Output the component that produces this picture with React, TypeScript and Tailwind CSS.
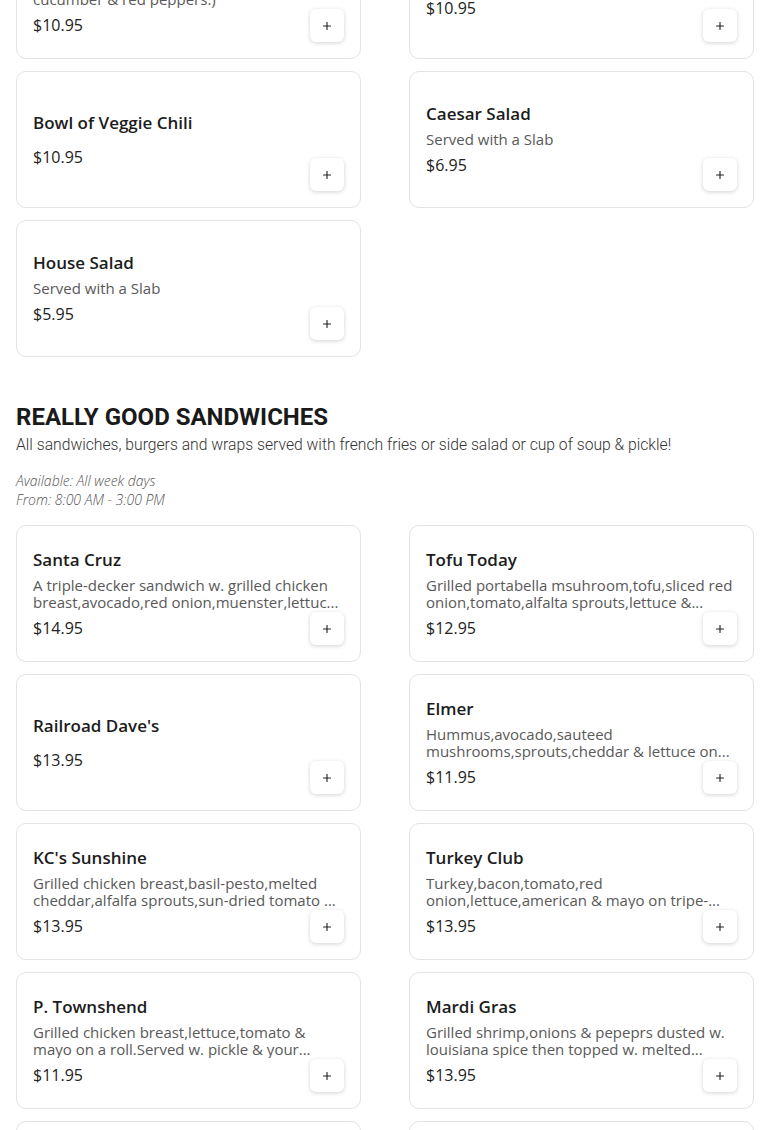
import { Plus } from "lucide-react";

type Item = { name: string; desc?: string; price: string };

const salads: Item[] = [
  {
    name: "Garden Salad",
    desc: "(Mixed greens,tomatoes,red onion,carrots, cucumber & red peppers.)",
    price: "$10.95",
  },
  { name: "Cup of Soup & Half Salad", price: "$10.95" },
  { name: "Bowl of Veggie Chili", price: "$10.95" },
  { name: "Caesar Salad", desc: "Served with a Slab", price: "$6.95" },
  { name: "House Salad", desc: "Served with a Slab", price: "$5.95" },
];

const sandwiches: Item[] = [
  {
    name: "Santa Cruz",
    desc: "A triple-decker sandwich w. grilled chicken breast,avocado,red onion,muenster,lettuc...",
    price: "$14.95",
  },
  {
    name: "Tofu Today",
    desc: "Grilled portabella msuhroom,tofu,sliced red onion,tomato,alfalta sprouts,lettuce &...",
    price: "$12.95",
  },
  { name: "Railroad Dave's", price: "$13.95" },
  {
    name: "Elmer",
    desc: "Hummus,avocado,sauteed mushrooms,sprouts,cheddar & lettuce on...",
    price: "$11.95",
  },
  {
    name: "KC's Sunshine",
    desc: "Grilled chicken breast,basil-pesto,melted cheddar,alfalfa sprouts,sun-dried tomato ...",
    price: "$13.95",
  },
  {
    name: "Turkey Club",
    desc: "Turkey,bacon,tomato,red onion,lettuce,american & mayo on tripe-...",
    price: "$13.95",
  },
  {
    name: "P. Townshend",
    desc: "Grilled chicken breast,lettuce,tomato & mayo on a roll.Served w. pickle & your...",
    price: "$11.95",
  },
  {
    name: "Mardi Gras",
    desc: "Grilled shrimp,onions & pepeprs dusted w. louisiana spice then topped w. melted...",
    price: "$13.95",
  },
  { name: "Veggie Burger", desc: "Served on a toasted bun.", price: "$12.95" },
  { name: "BLT", desc: "Bacon,lettuce & tomato on sourdough.", price: "$10.95" },
];

function MenuCard({ item }: { item: Item }) {
  return (
    <div className="relative flex min-h-[137px] flex-col justify-center rounded-[10px] border border-[#e3e3e3] bg-white p-4">
      <h3 className="text-[17px] font-semibold leading-6 text-[#1c1c1c]">{item.name}</h3>
      <p className="my-[5px] line-clamp-2 text-[15px] leading-[17px] text-[#595959]">
        {item.desc}
      </p>
      <div className="text-[16px] leading-6 text-[#222]">{item.price}</div>
      <button className="absolute bottom-4 right-4 flex h-[33px] w-[34px] items-center justify-center rounded-md bg-white shadow-[0_1px_4px_rgba(0,0,0,0.18)]">
        <Plus className="h-3 w-3 text-[#222]" strokeWidth={2.25} />
      </button>
    </div>
  );
}

export default function App() {
  return (
    <div className="h-[1130px] overflow-hidden bg-white" style={{ fontFamily: '"Open Sans", sans-serif' }}>
      <div className="-mt-[78px] px-4">
        <div className="grid grid-cols-2 gap-x-12 gap-y-3">
          {salads.map((s) => (
            <MenuCard key={s.name} item={s} />
          ))}
        </div>

        <section className="mt-[44px]">
          <h2 className="font-['Roboto'] text-2xl font-bold leading-8 text-[#1a1a1a]">
            REALLY GOOD SANDWICHES
          </h2>
          <p className="font-['Roboto'] text-[15.7px] font-light leading-6 text-[#333]">
            All sandwiches, burgers and wraps served with french fries or side salad or cup of soup &amp; pickle!
          </p>
          <div className="mt-[14px] text-[14px] font-light italic leading-[19px] text-[#555]">
            <div>Available: All week days</div>
            <div>From: 8:00 AM - 3:00 PM</div>
          </div>
          <div className="mt-4 grid grid-cols-2 gap-x-12 gap-y-3">
            {sandwiches.map((s) => (
              <MenuCard key={s.name} item={s} />
            ))}
          </div>
        </section>
      </div>
    </div>
  );
}
